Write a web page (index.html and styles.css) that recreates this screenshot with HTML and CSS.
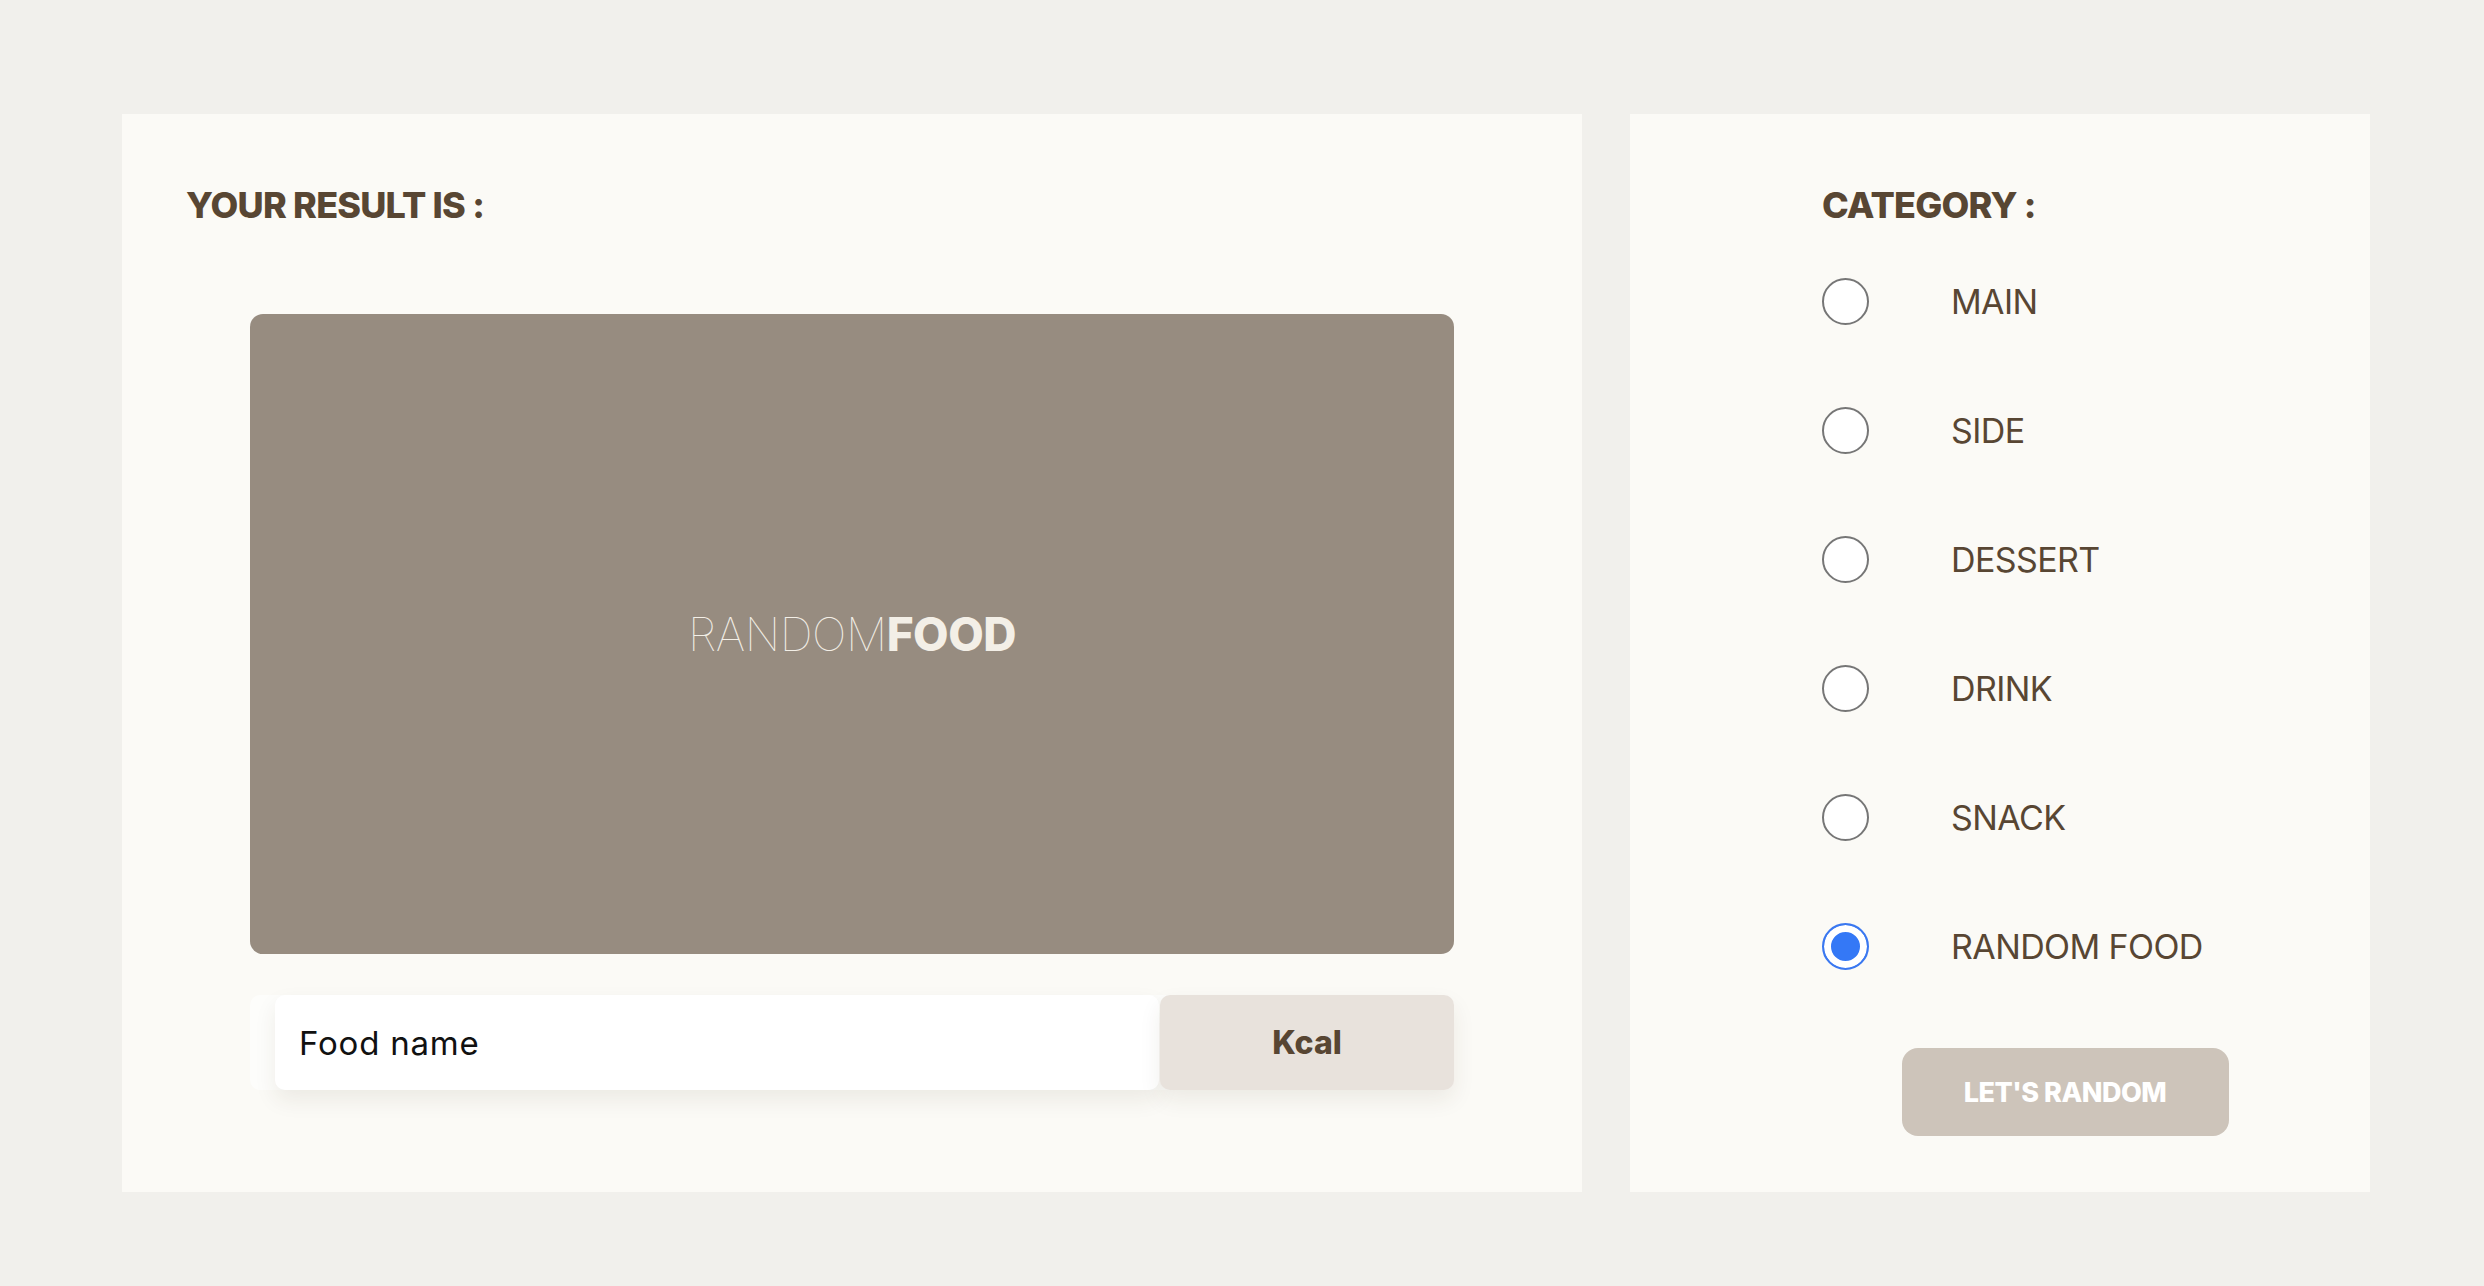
FILE: index.html
```html
<!DOCTYPE html>
<html lang="en">
<head>
<meta charset="utf-8">
<title>Random Food</title>
<link rel="stylesheet" href="styles.css">
</head>
<body>
<main class="page">
  <section class="panel panel-result">
    <h2 class="heading">YOUR RESULT IS :</h2>
    <div class="result">
      <div class="picture">
        <span class="logo"><span class="logo-thin">RANDOM</span><span class="logo-bold">FOOD</span></span>
      </div>
      <div class="info-row">
        <div class="food-name">Food name</div>
        <div class="kcal">Kcal</div>
      </div>
    </div>
  </section>
  <section class="panel panel-category">
    <div class="category">
      <h2 class="heading">CATEGORY :</h2>
      <div class="options">
        <label class="option"><input class="radio" type="radio" name="cat"><span class="option-label">MAIN</span></label>
        <label class="option"><input class="radio" type="radio" name="cat"><span class="option-label">SIDE</span></label>
        <label class="option"><input class="radio" type="radio" name="cat"><span class="option-label">DESSERT</span></label>
        <label class="option"><input class="radio" type="radio" name="cat"><span class="option-label">DRINK</span></label>
        <label class="option"><input class="radio" type="radio" name="cat"><span class="option-label">SNACK</span></label>
        <label class="option"><input class="radio" type="radio" name="cat" checked><span class="option-label">RANDOM FOOD</span></label>
      </div>
      <button class="random-btn" type="button">LET'S RANDOM</button>
    </div>
  </section>
</main>
</body>
</html>
```

FILE: styles.css
```css
* {
  box-sizing: border-box;
}

html, body {
  margin: 0;
  padding: 0;
}

body {
  background: #f1f0ec;
  font-family: "Inter", "Noto Sans", sans-serif;
  color: #584633;
  width: 2484px;
  height: 1286px;
  overflow: hidden;
}

.page {
  display: flex;
  gap: 48px;
  padding: 114px 114px 94px 122px;
  height: 1286px;
}

.panel {
  background: #fbfaf6;
  height: 1078px;
}

.panel-result {
  flex: 0 0 1460px;
  padding: 69px 64px 0 64px;
}

.panel-category {
  flex: 0 0 740px;
  padding: 69px 62px 0 192px;
}

.heading {
  margin: 0;
  font-size: 36px;
  line-height: 44px;
  font-weight: 800;
  letter-spacing: -0.8px;
  color: #584633;
}

.result {
  padding: 87px 64px 0 64px;
}

.picture {
  height: 640px;
  background: #978c80;
  border-radius: 13px;
  display: flex;
  align-items: center;
  justify-content: center;
}

.logo {
  font-size: 46px;
  line-height: 1;
  color: #f3efe7;
  letter-spacing: -0.5px;
}

.logo-thin {
  font-weight: 100;
}

.logo-bold {
  font-weight: 800;
}

.info-row {
  margin-top: 41px;
  height: 95px;
  display: flex;
  gap: 1px;
  padding-left: 25px;
  background: rgba(255, 255, 255, 0.55);
  border-radius: 10px;
}

.food-name {
  flex: 1;
  background: #ffffff;
  border-radius: 10px;
  display: flex;
  align-items: center;
  padding-left: 24px;
  font-size: 33px;
  letter-spacing: 0.8px;
  color: #111111;
  box-shadow: 0 10px 22px rgba(60, 50, 30, 0.08);
}

.kcal {
  flex: 0 0 294px;
  background: #e8e2dc;
  border-radius: 10px;
  display: flex;
  align-items: center;
  justify-content: center;
  font-size: 32px;
  font-weight: 800;
  color: #584633;
  box-shadow: 0 10px 22px rgba(60, 50, 30, 0.08);
}

.category {
  display: flex;
  flex-direction: column;
}

.options {
  margin-top: 51px;
  display: flex;
  flex-direction: column;
  gap: 82px;
}

.option {
  display: flex;
  align-items: center;
  gap: 82px;
  height: 47px;
}

.radio {
  appearance: none;
  -webkit-appearance: none;
  margin: 0;
  width: 47px;
  height: 47px;
  flex: 0 0 47px;
  border-radius: 50%;
  border: 2px solid #767676;
  background: #ffffff;
}

.radio:checked {
  border-color: #3b78f0;
  background: #3478f6;
  box-shadow: inset 0 0 0 7px #ffffff;
}

.option-label {
  font-size: 34px;
  font-weight: 400;
  letter-spacing: -0.6px;
  color: #584633;
}

.random-btn {
  margin-top: 78px;
  align-self: center;
  width: 327px;
  height: 88px;
  border: none;
  border-radius: 16px;
  background: #cdc4ba;
  color: #ffffff;
  font-family: "Inter", "Noto Sans", sans-serif;
  font-size: 27px;
  font-weight: 800;
  letter-spacing: -0.5px;
  padding: 0;
}
```
